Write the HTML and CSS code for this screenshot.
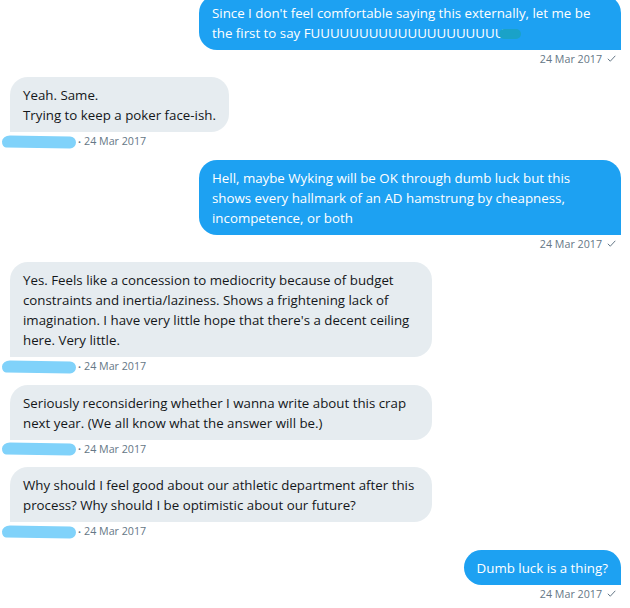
FILE: index.html
```html
<!DOCTYPE html>
<html lang="en">
<head>
<meta charset="utf-8">
<title>Messages</title>
<link rel="stylesheet" href="styles.css">
</head>
<body>
<main class="thread">
  <div class="msg msg--out">
    <div class="bubble bubble--out bubble--wide">Since I don't feel comfortable saying this externally, let me be<br>the first to say FUUUUUUUUUUUUUUUUUUUU<span class="redact"></span></div>
    <div class="meta meta--out">24 Mar 2017<svg class="check" width="9" height="7" viewBox="0 0 9 7"><path d="M0.8 3.8 L3.3 6.2 L8.3 0.8" fill="none" stroke="#657786" stroke-width="1"/></svg></div>
  </div>

  <div class="msg msg--in">
    <div class="bubble bubble--in">Yeah. Same.<br>Trying to keep a poker face-ish.</div>
    <div class="meta meta--in"><span class="scribble"></span><span class="dot">•</span>24 Mar 2017</div>
  </div>

  <div class="msg msg--out">
    <div class="bubble bubble--out bubble--wide">Hell, maybe Wyking will be OK through dumb luck but this<br>shows every hallmark of an AD hamstrung by cheapness,<br>incompetence, or both</div>
    <div class="meta meta--out">24 Mar 2017<svg class="check" width="9" height="7" viewBox="0 0 9 7"><path d="M0.8 3.8 L3.3 6.2 L8.3 0.8" fill="none" stroke="#657786" stroke-width="1"/></svg></div>
  </div>

  <div class="msg msg--in">
    <div class="bubble bubble--in bubble--wide">Yes. Feels like a concession to mediocrity because of budget<br>constraints and inertia/laziness. Shows a frightening lack of<br>imagination. I have very little hope that there's a decent ceiling<br>here. Very little.</div>
    <div class="meta meta--in"><span class="scribble"></span><span class="dot">•</span>24 Mar 2017</div>
  </div>

  <div class="msg msg--in">
    <div class="bubble bubble--in bubble--wide">Seriously reconsidering whether I wanna write about this crap<br>next year. (We all know what the answer will be.)</div>
    <div class="meta meta--in"><span class="scribble"></span><span class="dot">•</span>24 Mar 2017</div>
  </div>

  <div class="msg msg--in">
    <div class="bubble bubble--in bubble--wide">Why should I feel good about our athletic department after this<br>process? Why should I be optimistic about our future?</div>
    <div class="meta meta--in"><span class="scribble"></span><span class="dot">•</span>24 Mar 2017</div>
  </div>

  <div class="msg msg--out">
    <div class="bubble bubble--out">Dumb luck is a thing?</div>
    <div class="meta meta--out">24 Mar 2017<svg class="check" width="9" height="7" viewBox="0 0 9 7"><path d="M0.8 3.8 L3.3 6.2 L8.3 0.8" fill="none" stroke="#657786" stroke-width="1"/></svg></div>
  </div>
</main>
</body>
</html>
```

FILE: styles.css
```css
html, body {
  margin: 0;
  padding: 0;
  background: #ffffff;
}

body {
  font-family: "Open Sans", "Noto Sans", sans-serif;
  overflow: hidden;
}

.thread {
  display: flex;
  flex-direction: column;
  padding: 0 9px 0 10px;
  margin-top: -5.5px;
}

.msg {
  display: flex;
  flex-direction: column;
  margin-bottom: 9.5px;
}

.msg--out {
  align-items: flex-end;
}

.msg--in {
  align-items: flex-start;
}

.bubble {
  box-sizing: border-box;
  padding: 8px 13px 7px 13px;
  font-size: 13.3px;
  line-height: 20px;
  white-space: nowrap;
  border-radius: 18px;
}

.bubble--wide {
  width: 422px;
}

.bubble--out {
  background: #1da1f2;
  color: #ffffff;
  border-bottom-right-radius: 0;
}

.bubble--in {
  background: #e6ecf0;
  color: #14171a;
  border-bottom-left-radius: 0;
}

.redact {
  display: inline-block;
  width: 22px;
  height: 10px;
  margin-left: -5px;
  vertical-align: -1px;
  background: #1aa2c8;
  border-radius: 5px;
}

.meta {
  height: 18px;
  display: flex;
  align-items: center;
  font-size: 10.7px;
  color: #657786;
}

.meta--out {
  padding-right: 5px;
}

.check {
  margin-left: 5px;
}

.meta--in {
  margin-left: -8px;
}

.scribble {
  display: block;
  width: 74px;
  height: 12px;
  margin-top: 1px;
  background: #80d2fa;
  border-radius: 8px 6px 6px 4px / 6px 6px 6px 6px;
  transform: rotate(0.8deg);
}

.dot {
  font-size: 8px;
  margin: 0 3px 0 2px;
}
```
